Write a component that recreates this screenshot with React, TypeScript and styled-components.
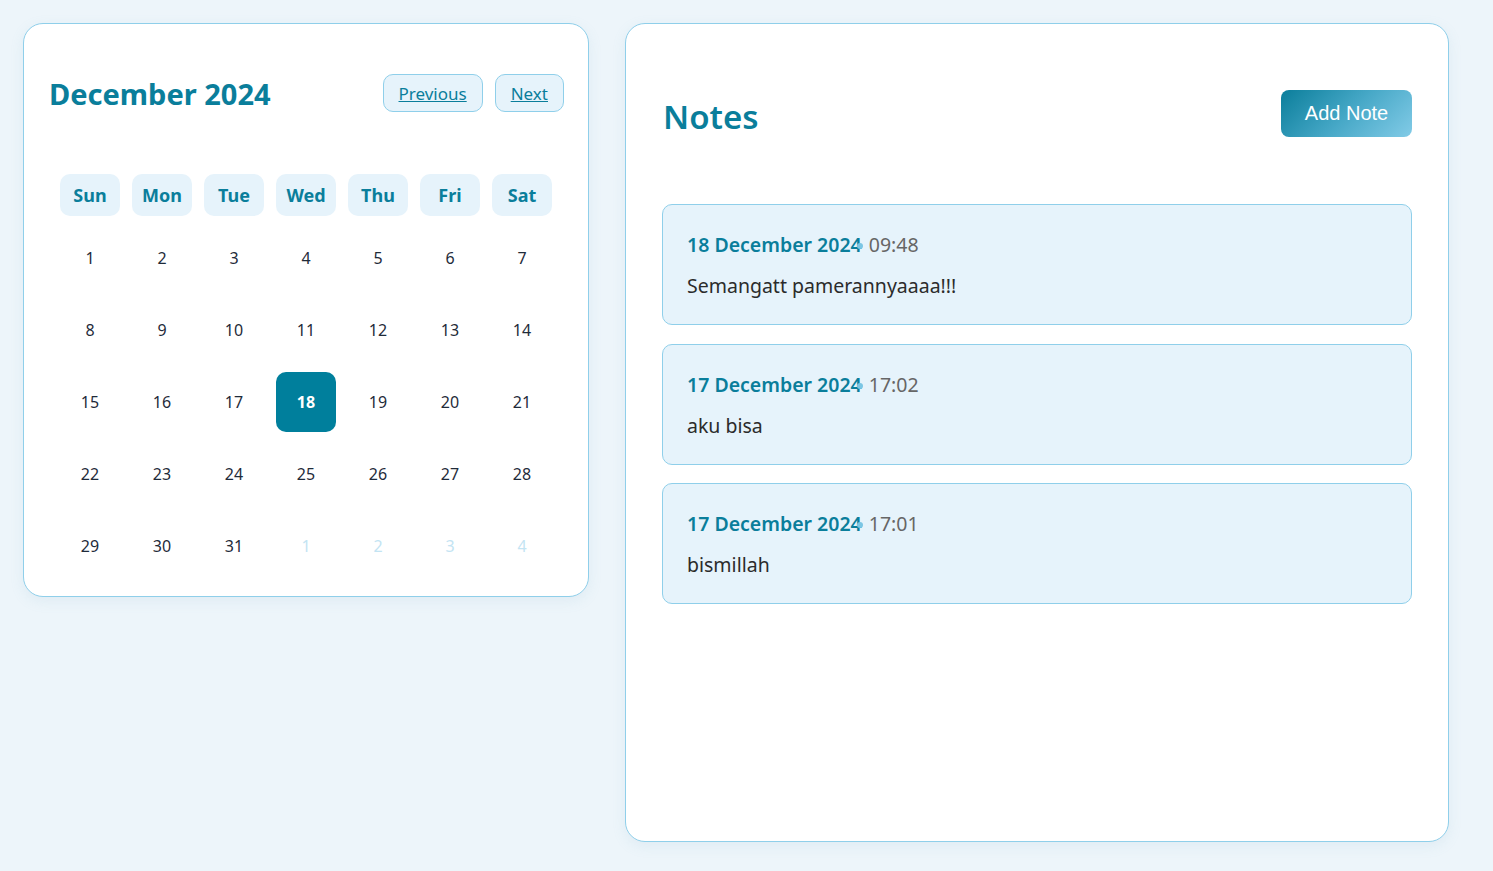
import React from "react";
import styled, { createGlobalStyle } from "styled-components";

const Global = createGlobalStyle`
  html, body { margin: 0; padding: 0; background: #edf5fa; }
  body { font-family: "Noto Sans", "Open Sans", sans-serif; }
  * { box-sizing: border-box; }
`;

const Page = styled.div`
  display: flex;
  align-items: flex-start;
  gap: 36px;
  padding: 23px 44px 29px 23px;
  min-height: 871px;
`;

const Card = styled.section`
  background: #fff;
  border: 1px solid #8fcfea;
  border-radius: 20px;
  box-shadow: 0 4px 14px rgba(120, 170, 200, 0.12);
`;

const CalendarCard = styled(Card)`
  width: 566px;
  padding: 24px 24px 20px 24px;
`;

const CalHeader = styled.div`
  display: flex;
  align-items: center;
  justify-content: space-between;
  margin-top: 26px;
  padding-left: 1px;
  height: 38px;
  margin-bottom: 62px;
`;

const Title = styled.h2`
  margin: 0;
  font-size: 29px;
  font-weight: 700;
  color: #0a7e9b;
  line-height: 1;
  padding-top: 1px;
`;

const NavGroup = styled.div`
  display: flex;
  gap: 12px;
`;

const NavButton = styled.button`
  font-family: "Noto Sans", "Open Sans", sans-serif;
  font-size: 17px;
  color: #0a7e9b;
  text-decoration: underline;
  background: #e6f3fb;
  border: 1px solid #8fcfea;
  border-radius: 10px;
  height: 38px;
  padding: 0 15px;
  cursor: pointer;
`;

const Grid = styled.div`
  display: grid;
  grid-template-columns: repeat(7, 60px);
  column-gap: 12px;
  justify-content: center;
`;

const WeekdayRow = styled(Grid)`
  margin-bottom: 12px;
`;

const DaysGrid = styled(Grid)`
  grid-auto-rows: 60px;
  row-gap: 12px;
`;

const Weekday = styled.div`
  height: 42px;
  display: flex;
  align-items: center;
  justify-content: center;
  background: #e6f3fb;
  border-radius: 10px;
  color: #0a7e9b;
  font-weight: 700;
  font-size: 18px;
`;

const Day = styled.div<{ $selected?: boolean; $muted?: boolean }>`
  display: flex;
  align-items: center;
  justify-content: center;
  border-radius: 10px;
  font-size: 16px;
  font-weight: ${(p) => (p.$selected ? 700 : 400)};
  color: ${(p) => (p.$selected ? "#fff" : p.$muted ? "#c3e4f3" : "#1f2b3a")};
  background: ${(p) => (p.$selected ? "#007f9c" : "transparent")};
`;

const NotesCard = styled(Card)`
  flex: 1;
  height: 819px;
  padding: 66px 36px 36px 36px;
`;

const NotesHeader = styled.div`
  display: flex;
  align-items: center;
  justify-content: space-between;
  margin-bottom: 67px;
`;

const NotesTitle = styled.h2`
  margin: 0;
  font-size: 33px;
  font-weight: 600;
  color: #0a7e9b;
  line-height: 1;
  padding-top: 5px;
  padding-left: 1px;
`;

const AddButton = styled.button`
  font-family: "Liberation Sans", Arial, sans-serif;
  font-size: 20px;
  color: #fff;
  border: none;
  border-radius: 8px;
  width: 131px;
  height: 47px;
  background: linear-gradient(135deg, #0b7e9b 0%, #45a7c6 50%, #82cbe7 100%);
  cursor: pointer;
`;

const NoteList = styled.div`
  display: flex;
  flex-direction: column;
  gap: 18.5px;
`;

const NoteItem = styled.div`
  background: #e6f3fb;
  border: 1px solid #8fcfea;
  border-radius: 10px;
  height: 121px;
  padding: 26px 24px 0 24px;
`;

const NoteMeta = styled.div`
  display: flex;
  align-items: center;
  font-size: 19.5px;
  line-height: 28px;
  margin-bottom: 13px;
`;

const NoteDate = styled.span`
  color: #0a7e9b;
  font-weight: 600;
`;

const Dot = styled.span`
  flex: none;
  display: block;
  width: 6px;
  height: 6px;
  border-radius: 50%;
  background: #7cc6e4;
  margin-left: -5px;
  margin-right: 6px;
  position: relative;
  top: 1px;
`;

const NoteTime = styled.span`
  color: #666;
`;

const NoteText = styled.div`
  color: #2b2b2b;
  font-size: 19.5px;
  line-height: 28px;
`;

const weekdays = ["Sun", "Mon", "Tue", "Wed", "Thu", "Fri", "Sat"];
const days: { n: number; muted?: boolean }[] = [
  ...Array.from({ length: 31 }, (_, i) => ({ n: i + 1 })),
  ...[1, 2, 3, 4].map((n) => ({ n, muted: true })),
];

const notes = [
  { date: "18 December 2024", time: "09:48", text: "Semangatt pamerannyaaaa!!!" },
  { date: "17 December 2024", time: "17:02", text: "aku bisa" },
  { date: "17 December 2024", time: "17:01", text: "bismillah" },
];

export default function App() {
  return (
    <>
      <Global />
      <Page>
        <CalendarCard>
          <CalHeader>
            <Title>December 2024</Title>
            <NavGroup>
              <NavButton>Previous</NavButton>
              <NavButton>Next</NavButton>
            </NavGroup>
          </CalHeader>
          <WeekdayRow>
            {weekdays.map((w) => (
              <Weekday key={w}>{w}</Weekday>
            ))}
          </WeekdayRow>
          <DaysGrid>
            {days.map((d, i) => (
              <Day key={i} $muted={d.muted} $selected={!d.muted && d.n === 18}>
                {d.n}
              </Day>
            ))}
          </DaysGrid>
        </CalendarCard>
        <NotesCard>
          <NotesHeader>
            <NotesTitle>Notes</NotesTitle>
            <AddButton>Add Note</AddButton>
          </NotesHeader>
          <NoteList>
            {notes.map((n, i) => (
              <NoteItem key={i}>
                <NoteMeta>
                  <NoteDate>{n.date}</NoteDate>
                  <Dot />
                  <NoteTime>{n.time}</NoteTime>
                </NoteMeta>
                <NoteText>{n.text}</NoteText>
              </NoteItem>
            ))}
          </NoteList>
        </NotesCard>
      </Page>
    </>
  );
}
